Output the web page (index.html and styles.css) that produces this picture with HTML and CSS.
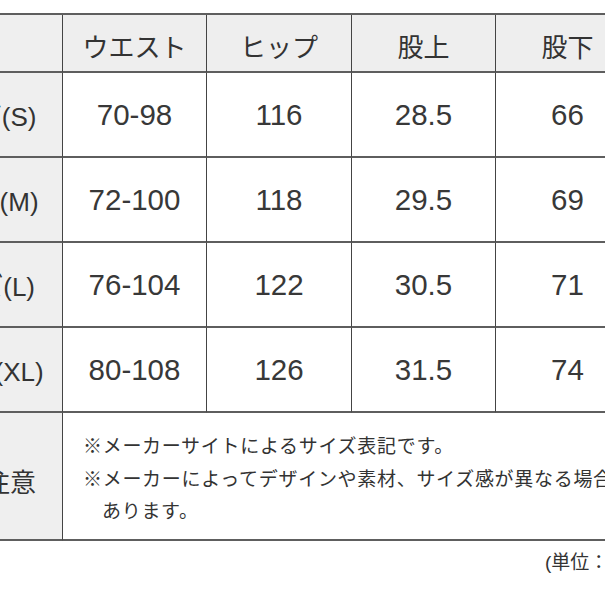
FILE: index.html
```html
<!DOCTYPE html>
<html lang="ja">
<head>
<meta charset="utf-8">
<title>サイズ表</title>
<link rel="stylesheet" href="styles.css">
</head>
<body>
<div class="size-table">
  <div class="cell head label"></div>
  <div class="cell head">ウエスト</div>
  <div class="cell head">ヒップ</div>
  <div class="cell head">股上</div>
  <div class="cell head">股下</div>

  <div class="cell label">サイズ(S)</div>
  <div class="cell num">70-98</div>
  <div class="cell num">116</div>
  <div class="cell num">28.5</div>
  <div class="cell num">66</div>

  <div class="cell label">サイズ(M)</div>
  <div class="cell num">72-100</div>
  <div class="cell num">118</div>
  <div class="cell num">29.5</div>
  <div class="cell num">69</div>

  <div class="cell label">サイズ(L)</div>
  <div class="cell num">76-104</div>
  <div class="cell num">122</div>
  <div class="cell num">30.5</div>
  <div class="cell num">71</div>

  <div class="cell label">サイズ(XL)</div>
  <div class="cell num">80-108</div>
  <div class="cell num">126</div>
  <div class="cell num">31.5</div>
  <div class="cell num">74</div>

  <div class="cell label note-label">ご注意</div>
  <div class="cell notes">
    <p class="note">※メーカーサイトによるサイズ表記です。</p>
    <p class="note">※メーカーによってデザインや素材、サイズ感が異なる場合が<br>あります。</p>
  </div>
</div>
<div class="unit">(単位：cm)</div>
</body>
</html>
```

FILE: styles.css
```css
html, body {
  margin: 0;
  padding: 0;
  background: #ffffff;
  overflow: hidden;
}

body {
  font-family: "Liberation Sans", "Noto Sans CJK JP", sans-serif;
  color: #333333;
}

.size-table {
  display: grid;
  grid-template-columns: 154px 144px 145px 144px 144px;
  grid-template-rows: 58px 85px 85px 85px 85px 128px;
  width: max-content;
  margin: 13px 0 0 -91px;
  border-top: 2px solid #5e5e5e;
}

.cell {
  box-sizing: border-box;
  display: flex;
  align-items: center;
  justify-content: center;
  border-right: 1px solid #444444;
  border-bottom: 2px solid #5e5e5e;
  background: #ffffff;
  white-space: nowrap;
}

.head {
  background: #eeeeee;
  font-size: 26px;
  padding-top: 4px;
}

.label {
  background: #efefef;
  font-size: 26px;
  padding-right: 10px;
}

.num {
  font-size: 29.5px;
  padding-top: 1px;
  color: #383838;
}

.note-label {
  justify-content: flex-end;
  padding-right: 26px;
  padding-top: 8px;
}

.notes {
  grid-column: 2 / -1;
  flex-direction: column;
  justify-content: flex-start;
  align-items: flex-start;
  padding: 18px 0 0 20px;
  font-size: 19px;
  line-height: 32.5px;
  letter-spacing: 0.7px;
}

.note {
  margin: 0;
  padding-left: 1em;
  text-indent: -1em;
}

.unit {
  margin: 10px 0 0 545px;
  font-size: 19px;
  line-height: 24px;
  white-space: nowrap;
}
```
